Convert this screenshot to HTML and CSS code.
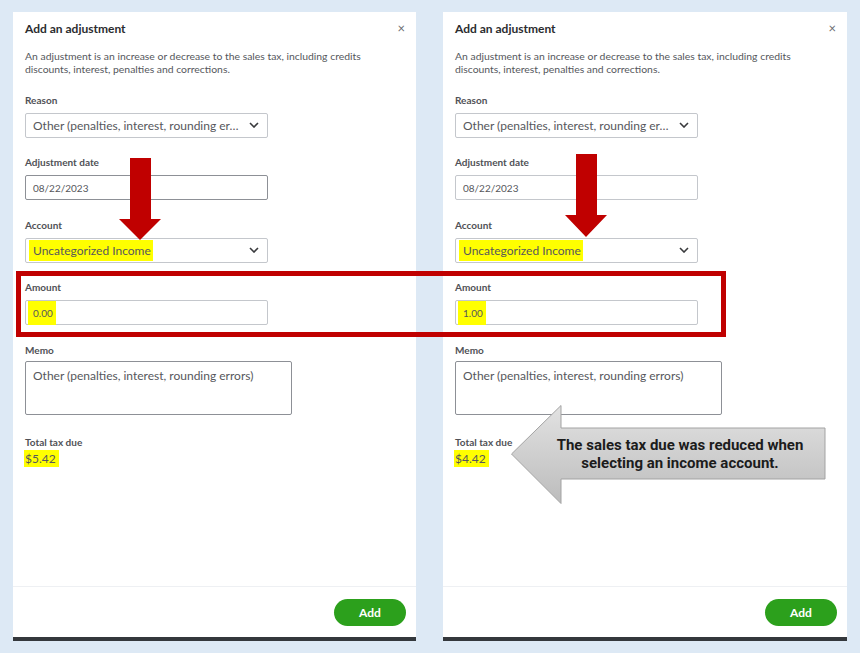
FILE: index.html
```html
<!DOCTYPE html>
<html lang="en">
<head>
    <meta charset="UTF-8">
    <meta name="viewport" content="width=device-width, initial-scale=1.0">
    <title>Add an adjustment - comparison</title>
    <link rel="stylesheet" href="styles.css">
</head>
<body>
    <div class="screen">
        <div class="panels">
            <!-- Before: amount 0.00 -->
            <div class="panel">
                <div class="panel-body">
                    <div class="panel-header">
                        <h2>Add an adjustment</h2>
                        <span class="close">&times;</span>
                    </div>
                    <p class="intro">An adjustment is an increase or decrease to the sales tax, including credits discounts, interest, penalties and corrections.</p>

                    <div class="field">
                        <label>Reason</label>
                        <div class="control select">
                            <span>Other (penalties, interest, rounding er…</span>
                            <svg class="chevron" viewBox="0 0 10 6"><path d="M1 1l4 4 4-4"/></svg>
                        </div>
                    </div>
                    <div class="field">
                        <label>Adjustment date</label>
                        <div class="control date focused">08/22/2023</div>
                    </div>
                    <div class="field">
                        <label>Account</label>
                        <div class="control select">
                            <span class="mark">Uncategorized Income</span>
                            <svg class="chevron" viewBox="0 0 10 6"><path d="M1 1l4 4 4-4"/></svg>
                        </div>
                    </div>
                    <div class="field">
                        <label>Amount</label>
                        <div class="control amount"><span class="mark tall">0.00</span></div>
                    </div>
                    <div class="field memo-field">
                        <label>Memo</label>
                        <div class="control memo">Other (penalties, interest, rounding errors)</div>
                    </div>
                    <div class="total">
                        <label>Total tax due</label>
                        <div class="total-value"><span class="mark">$5.42</span></div>
                    </div>
                </div>
                <div class="panel-footer">
                    <button class="btn-add">Add</button>
                </div>
            </div>

            <!-- After: amount 1.00 -->
            <div class="panel">
                <div class="panel-body">
                    <div class="panel-header">
                        <h2>Add an adjustment</h2>
                        <span class="close">&times;</span>
                    </div>
                    <p class="intro">An adjustment is an increase or decrease to the sales tax, including credits discounts, interest, penalties and corrections.</p>

                    <div class="field">
                        <label>Reason</label>
                        <div class="control select">
                            <span>Other (penalties, interest, rounding er…</span>
                            <svg class="chevron" viewBox="0 0 10 6"><path d="M1 1l4 4 4-4"/></svg>
                        </div>
                    </div>
                    <div class="field">
                        <label>Adjustment date</label>
                        <div class="control date">08/22/2023</div>
                    </div>
                    <div class="field">
                        <label>Account</label>
                        <div class="control select">
                            <span class="mark">Uncategorized Income</span>
                            <svg class="chevron" viewBox="0 0 10 6"><path d="M1 1l4 4 4-4"/></svg>
                        </div>
                    </div>
                    <div class="field">
                        <label>Amount</label>
                        <div class="control amount"><span class="mark tall">1.00</span></div>
                    </div>
                    <div class="field memo-field">
                        <label>Memo</label>
                        <div class="control memo">Other (penalties, interest, rounding errors)</div>
                    </div>
                    <div class="total">
                        <label>Total tax due</label>
                        <div class="total-value"><span class="mark">$4.42</span></div>
                    </div>
                </div>
                <div class="panel-footer">
                    <button class="btn-add">Add</button>
                </div>
            </div>
        </div>

        <!-- Annotations -->
        <div class="highlight-box"></div>

        <svg class="down-arrow arrow-left" viewBox="0 0 42 82">
            <polygon points="11,0 32,0 32,61 42,61 21,82 0,61 11,61"/>
        </svg>
        <svg class="down-arrow arrow-right" viewBox="0 0 42 83">
            <polygon points="11,0 32,0 32,61 42,61 21,83 0,61 11,61"/>
        </svg>

        <div class="callout">
            <svg class="callout-shape" viewBox="0 0 315 99">
                <defs>
                    <linearGradient id="callout-fill" x1="0" y1="0" x2="0" y2="1">
                        <stop offset="0" stop-color="#e2e2e2"/>
                        <stop offset="1" stop-color="#bcbcbc"/>
                    </linearGradient>
                </defs>
                <polygon points="0.5,49 50,0.5 50,23 314,23 314,74 50,74 50,98.5" fill="url(#callout-fill)" stroke="#a3a3a3" stroke-width="1"/>
            </svg>
            <div class="callout-text">The sales tax due was reduced when<br>selecting an income account.</div>
        </div>
    </div>
</body>
</html>
```

FILE: styles.css
```css
body {
    margin: 0;
    background-color: #dde9f5;
    font-family: Lato, "Open Sans", sans-serif;
    color: #393a3d;
}
.screen {
    position: relative;
    width: 860px;
    height: 653px;
    overflow: hidden;
}
.panels {
    display: flex;
    gap: 27px;
    padding: 12px 0 0 13px;
}
.panel {
    width: 403px;
    height: 625px;
    background-color: white;
    border-bottom: 4px solid #34383c;
    display: flex;
    flex-direction: column;
}
.panel:last-child {
    width: 404px;
}
.panel-body {
    flex: 1;
    padding: 8px 12px 0;
}
.panel-header {
    display: flex;
    justify-content: space-between;
    align-items: center;
    height: 16px;
}
.panel-header h2 {
    margin: 0;
    font-size: 12px;
    font-weight: 700;
    color: #2b2c2f;
}
.close {
    font-size: 13px;
    color: #6b6c72;
    margin-right: -1px;
}
.intro {
    margin: 14px 0 0;
    font-size: 10.4px;
    line-height: 13px;
    color: #55575c;
    width: 360px;
}
.field {
    margin-top: 17.5px;
}
.intro + .field {
    margin-top: 16.5px;
}
label {
    display: block;
    font-size: 10px;
    font-weight: 700;
    line-height: 14px;
    color: #505156;
    margin-bottom: 6px;
}
.control {
    box-sizing: border-box;
    width: 243px;
    height: 25px;
    border: 1px solid #c4c7cc;
    border-radius: 2px;
    display: flex;
    align-items: center;
    padding: 0 7px;
    font-size: 12px;
    color: #56575c;
}
.select {
    justify-content: space-between;
}
.chevron {
    width: 10px;
    height: 6px;
    fill: none;
    stroke: #393a3d;
    stroke-width: 1.6;
    margin-right: 1px;
}
.date {
    font-size: 10px;
}
.focused {
    border-color: #8d9096;
}
.amount {
    font-size: 10px;
}
.memo-field label {
    margin-bottom: 4px;
}
.memo {
    width: 267px;
    height: 54px;
    align-items: flex-start;
    padding-top: 6px;
    border-color: #8d9096;
}
.total {
    margin-top: 20px;
}
.total label {
    margin-bottom: 2px;
}
.total-value {
    font-size: 12px;
    line-height: 16px;
    color: #56575c;
}
.mark {
    background-color: #ffff00;
    padding: 3px 2px 3px 4px;
    margin-left: -4px;
}
.mark.tall {
    padding: 6px 3px 6px 5px;
    margin-left: -5px;
}
.total-value .mark {
    padding: 1px 3px 1px 1px;
    margin-left: -1px;
}
.panel-footer {
    height: 50px;
    border-top: 1px solid #eef0f3;
    display: flex;
    justify-content: flex-end;
    align-items: center;
    padding-right: 10px;
}
.btn-add {
    width: 72px;
    height: 27px;
    border: none;
    border-radius: 14px;
    background-color: #2ca01c;
    color: white;
    font-family: Lato, sans-serif;
    font-size: 12px;
    font-weight: 700;
    margin-top: 1px;
}
.highlight-box {
    position: absolute;
    left: 16px;
    top: 271px;
    width: 710px;
    height: 66px;
    box-sizing: border-box;
    border: 5px solid #c00000;
}
.down-arrow {
    position: absolute;
    width: 42px;
    fill: #c00000;
}
.arrow-left {
    left: 119px;
    top: 158px;
    height: 82px;
}
.arrow-right {
    left: 565px;
    top: 154px;
    height: 83px;
}
.callout {
    position: absolute;
    left: 511px;
    top: 405px;
    width: 315px;
    height: 99px;
}
.callout-shape {
    display: block;
    width: 315px;
    height: 99px;
}
.callout-text {
    position: absolute;
    left: 50px;
    top: 23px;
    width: 264px;
    height: 51px;
    box-sizing: border-box;
    padding-right: 26px;
    display: flex;
    align-items: center;
    justify-content: center;
    text-align: center;
    font-family: Roboto, sans-serif;
    font-size: 15px;
    font-weight: 700;
    line-height: 18px;
    color: #1c1c1c;
    white-space: nowrap;
}
```
